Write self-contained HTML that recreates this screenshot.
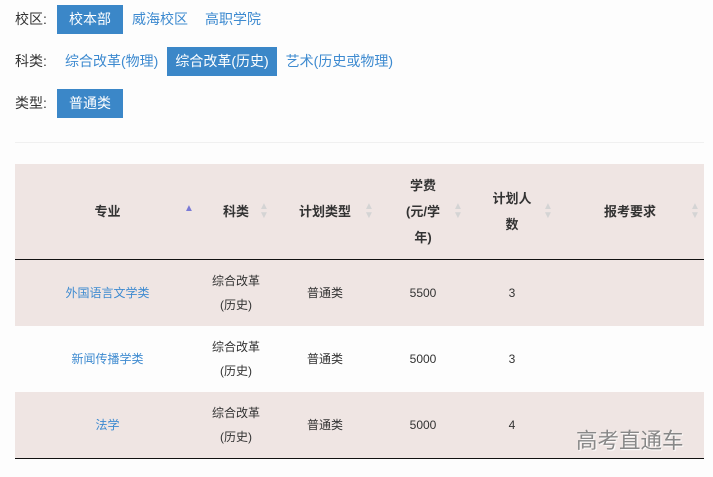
<!DOCTYPE html>
<html><head><meta charset="utf-8"><style>
body{margin:0;background:#fdfdfd;font-family:"Liberation Sans","Noto Sans CJK SC",sans-serif;width:713px;height:477px;overflow:hidden;position:relative;color:#333}
.row{position:absolute;left:15px;height:29px;font-size:14px;line-height:29px;display:flex}
.lab{width:42px;color:#333}
.opt{padding:0 8px;color:#3d8ad0;margin-right:1px}
.opt.on{background:#3b87c8;color:#fff}
.sep{position:absolute;left:15px;width:689px;top:142px;height:1px;background:#f0f0f0}
table{position:absolute;left:15px;top:164px;width:689px;border-collapse:collapse;font-size:12px;table-layout:fixed}
th{height:95px;padding:0;background:#efe5e3;font-weight:bold;font-size:13px;line-height:26px;position:relative;border-bottom:1.5px solid #111;color:#333}
td{height:66px;padding:0;text-align:center;line-height:24px;color:#333}
tr.p td{background:#efe5e3}
td.a{color:#3d8ad0}
.ar{position:absolute;top:38px;font-size:10px;color:#d4d4d4;line-height:9px}
.ar.act{color:#7a7ad6}
.wm{position:absolute;left:576px;top:424px;font-size:21.5px;color:#888;text-shadow:1px 1px 1px #fff}
</style></head><body>
<div class="row" style="top:5px"><span class="lab">校区:</span><span class="opt on" style="padding:0 12px">校本部</span><span class="opt">威海校区</span><span class="opt">高职学院</span></div>
<div class="row" style="top:47px"><span class="lab">科类:</span><span class="opt">综合改革(物理)</span><span class="opt on">综合改革(历史)</span><span class="opt">艺术(历史或物理)</span></div>
<div class="row" style="top:89px"><span class="lab">类型:</span><span class="opt on" style="padding:0 12px">普通类</span></div>
<div class="sep"></div>
<table>
<colgroup><col style="width:185px"><col style="width:72px"><col style="width:106px"><col style="width:90px"><col style="width:88px"><col></colgroup>
<tr><th>专业<span class="ar act" style="left:169px;top:40px">▲</span></th>
<th>科类<span class="ar" style="left:59px">▲<br>▼</span></th>
<th>计划类型<span class="ar" style="left:92px">▲<br>▼</span></th>
<th>学费<br>(元/学<br>年)<span class="ar" style="left:75px">▲<br>▼</span></th>
<th>计划人<br>数<span class="ar" style="left:75px">▲<br>▼</span></th>
<th>报考要求<span class="ar" style="left:134px">▲<br>▼</span></th></tr>
<tr class="p"><td class="a">外国语言文学类</td><td>综合改革<br>(历史)</td><td>普通类</td><td>5500</td><td>3</td><td></td></tr>
<tr><td class="a">新闻传播学类</td><td>综合改革<br>(历史)</td><td>普通类</td><td>5000</td><td>3</td><td></td></tr>
<tr class="p"><td class="a" style="border-bottom:1.5px solid #111">法学</td><td style="border-bottom:1.5px solid #111">综合改革<br>(历史)</td><td style="border-bottom:1.5px solid #111">普通类</td><td style="border-bottom:1.5px solid #111">5000</td><td style="border-bottom:1.5px solid #111">4</td><td style="border-bottom:1.5px solid #111"></td></tr>
</table>
<div class="wm">高考直通车</div>
</body></html>
